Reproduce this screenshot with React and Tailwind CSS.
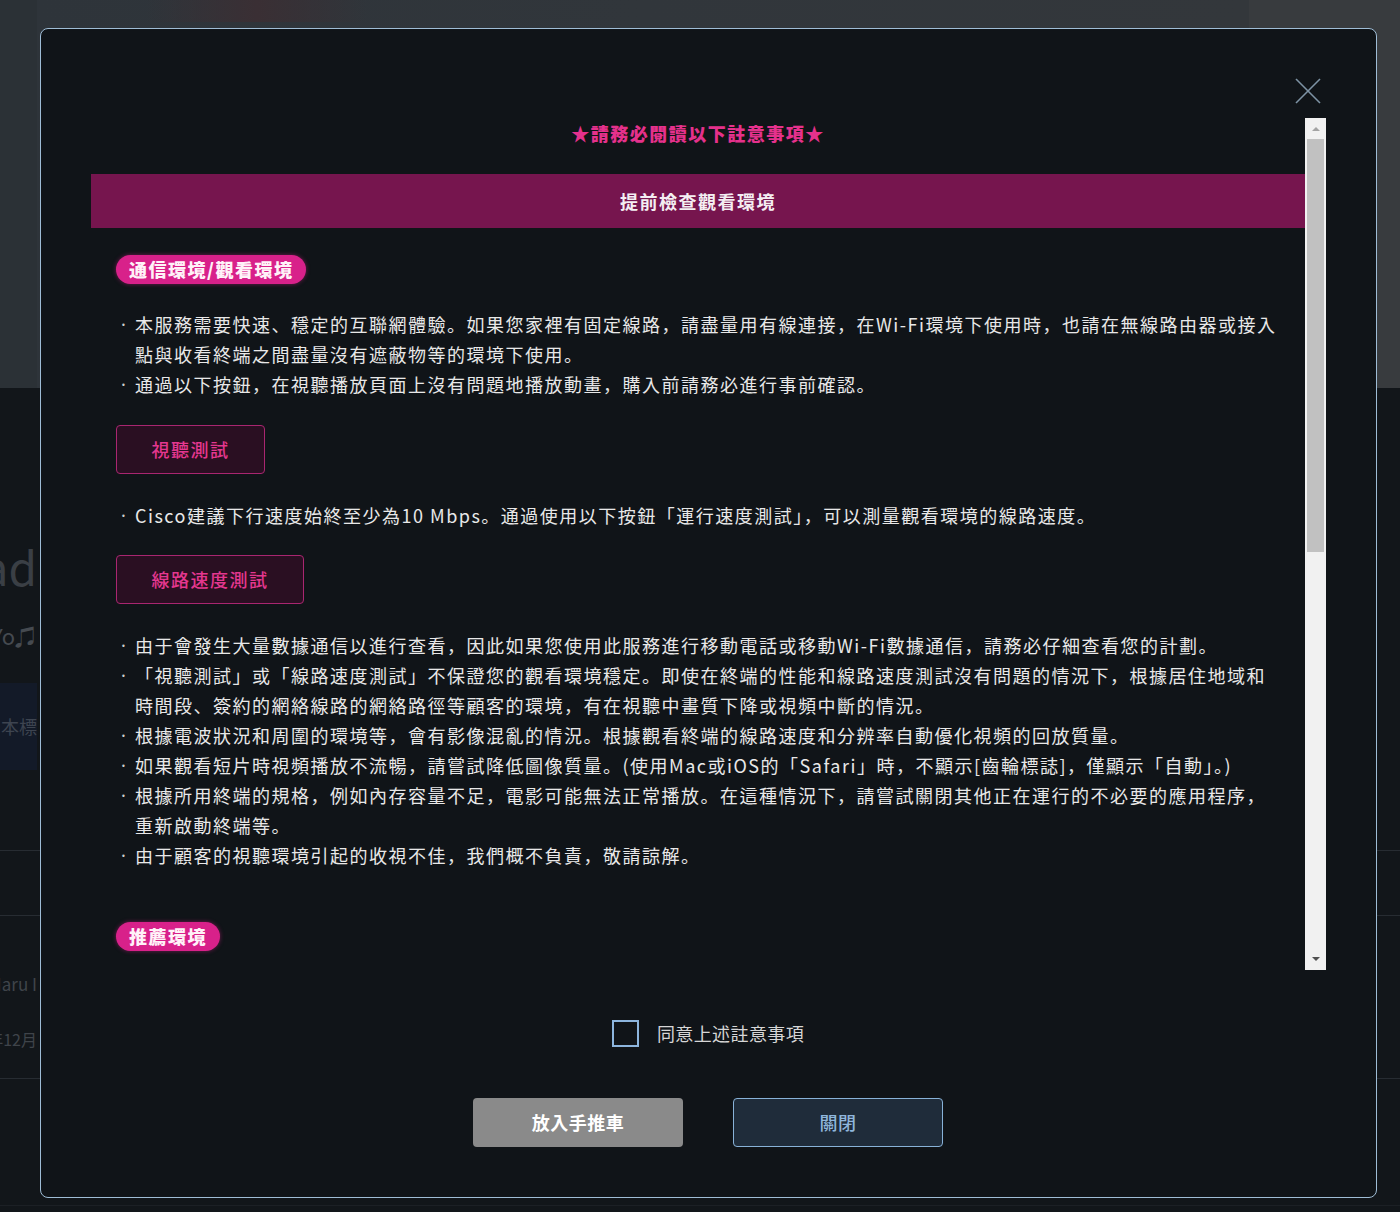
import React from "react";

function Item({ lines }) {
  return (
    <div className="flex">
      <span className="w-[19px] shrink-0 pl-[5px] font-['Noto_Sans',sans-serif] tracking-normal text-[#cfcfcf]">·</span>
      <div className="flex flex-col">
        {lines.map((l, i) => (
          <span key={i} className="whitespace-nowrap">
            {l}
          </span>
        ))}
      </div>
    </div>
  );
}

function Badge({ children }) {
  return (
    <div className="flex">
      <span className="h-[29px] rounded-full bg-[#d8218a] px-[13px] text-[18px] font-black leading-[29px] tracking-[1.5px] text-[#fff2f8] shadow-[0_0_4px_rgba(216,33,138,0.5)]">
        {children}
      </span>
    </div>
  );
}

function PinkButton({ children, w }) {
  return (
    <div className="flex">
      <button
        className={`h-[49px] ${w} rounded-[4px] border border-[#a92670] bg-[#2a0f22] text-[18px] font-medium tracking-[1.5px] text-[#e4378f]`}
      >
        {children}
      </button>
    </div>
  );
}

function BgLeft({ children, className = "" }) {
  return (
    <div className={`flex w-[37px] justify-end overflow-hidden whitespace-nowrap ${className}`}>
      {children}
    </div>
  );
}

export default function App() {
  return (
    <div className="relative h-[1212px] w-[1400px] overflow-hidden bg-[#12161a] font-['Noto_Sans_CJK_JP','Noto_Sans_CJK_TC',sans-serif]">
      {/* background page */}
      <div className="flex h-[388px]">
        <div className="w-[37px] bg-[#2b3136]" />
        <div className="flex flex-1 flex-col bg-gradient-to-r from-[#2e343a] via-[#31363b] to-[#33373b]">
          <div className="ml-[110px] h-[22px] w-[220px] bg-gradient-to-r from-transparent via-[#3a2f34] to-transparent" />
        </div>
        <div className="w-[151px] bg-[#383b3e]" />
      </div>
      <div className="flex h-[824px] flex-col">
        <div className="flex h-[295px] flex-col">
          <div className="h-[150px]" />
          <BgLeft className="h-[56px] items-center text-[46px] leading-[56px] text-[#3a3f45]">
            <span>Road</span>
          </BgLeft>
          <div className="h-[26px]" />
          <BgLeft className="h-[30px] items-center text-[22px] leading-[30px] text-[#454a50]">
            <span>Yo♫</span>
          </BgLeft>
        </div>
        <BgLeft className="h-[87px] items-center bg-[#131a28] text-[18px] text-[#3d4450]">
          <span>日本標</span>
        </BgLeft>
        <div className="h-[80px]" />
        <div className="h-[65px] border-t border-[#272c32]" />
        <div className="flex h-[163px] flex-col border-t border-[#272c32]">
          <div className="h-[53px]" />
          <BgLeft className="h-[30px] items-center text-[17px] text-[#3f444a]">
            <span>Haru I</span>
          </BgLeft>
          <div className="h-[25px]" />
          <BgLeft className="h-[30px] items-center text-[16px] text-[#3f444a]">
            <span>2022年12月</span>
          </BgLeft>
        </div>
        <div className="h-[127px] border-t border-[#272c32]" />
        <div className="flex-1 border-t border-[#1c2025]" />
      </div>

      {/* modal */}
      <div className="absolute left-[40px] top-[28px] flex h-[1170px] w-[1337px] flex-col rounded-[8px] border border-[#9fbdd6] bg-[#101418]">
        <div className="flex h-[89px] items-end justify-end pb-[14px] pr-[55px]">
          <svg width="26" height="26" viewBox="0 0 26 26">
            <line x1="1" y1="1" x2="25" y2="25" stroke="#7d93a4" strokeWidth="1.6" />
            <line x1="25" y1="1" x2="1" y2="25" stroke="#7d93a4" strokeWidth="1.6" />
          </svg>
        </div>

        <div className="ml-[50px] flex h-[852px] w-[1235px]">
          <div className="w-[1214px] overflow-hidden">
            <div className="h-[30px] text-center text-[18px] font-black leading-[30px] tracking-[1.5px] text-[#e5318c]">
              ★請務必閱讀以下註意事項★
            </div>
            <div className="mt-[26px] flex h-[54px] items-center justify-center bg-[#76154e] text-[18px] font-bold tracking-[1.5px] text-[#f4eef2]">
              提前檢查觀看環境
            </div>
            <div className="px-[25px]">
              <div className="mt-[27px]">
                <Badge>通信環境/觀看環境</Badge>
              </div>
              <div className="mt-[25px] text-[18px] leading-[30px] tracking-[1.5px] text-[#e8e8e8]">
                <Item
                  lines={[
                    "本服務需要快速、穩定的互聯網體驗。如果您家裡有固定線路，請盡量用有線連接，在Wi-Fi環境下使用時，也請在無線路由器或接入",
                    "點與收看終端之間盡量沒有遮蔽物等的環境下使用。",
                  ]}
                />
                <Item lines={["通過以下按鈕，在視聽播放頁面上沒有問題地播放動畫，購入前請務必進行事前確認。"]} />
              </div>
              <div className="mt-[26px]">
                <PinkButton w="w-[149px]">視聽測試</PinkButton>
              </div>
              <div className="mt-[26px] text-[18px] leading-[30px] tracking-[1.5px] text-[#e8e8e8]">
                <Item lines={["Cisco建議下行速度始終至少為10 Mbps。通過使用以下按鈕「運行速度測試」，可以測量觀看環境的線路速度。"]} />
              </div>
              <div className="mt-[25px]">
                <PinkButton w="w-[188px]">線路速度測試</PinkButton>
              </div>
              <div className="mt-[26px] text-[18px] leading-[30px] tracking-[1.5px] text-[#e8e8e8]">
                <Item lines={["由于會發生大量數據通信以進行查看，因此如果您使用此服務進行移動電話或移動Wi-Fi數據通信，請務必仔細查看您的計劃。"]} />
                <Item
                  lines={[
                    "「視聽測試」或「線路速度測試」不保證您的觀看環境穩定。即使在終端的性能和線路速度測試沒有問題的情況下，根據居住地域和",
                    "時間段、簽約的網絡線路的網絡路徑等顧客的環境，有在視聽中畫質下降或視頻中斷的情況。",
                  ]}
                />
                <Item lines={["根據電波狀況和周圍的環境等，會有影像混亂的情況。根據觀看終端的線路速度和分辨率自動優化視頻的回放質量。"]} />
                <Item lines={["如果觀看短片時視頻播放不流暢，請嘗試降低圖像質量。(使用Mac或iOS的「Safari」時，不顯示[齒輪標誌]，僅顯示「自動」。)"]} />
                <Item
                  lines={[
                    "根據所用終端的規格，例如內存容量不足，電影可能無法正常播放。在這種情況下，請嘗試關閉其他正在運行的不必要的應用程序，",
                    "重新啟動終端等。",
                  ]}
                />
                <Item lines={["由于顧客的視聽環境引起的收視不佳，我們概不負責，敬請諒解。"]} />
              </div>
              <div className="mt-[52px]">
                <Badge>推薦環境</Badge>
              </div>
            </div>
          </div>

          {/* scrollbar */}
          <div className="flex h-full w-[21px] flex-col bg-[#f1f1f1]">
            <div className="flex h-[21px] items-center justify-center">
              <div className="h-0 w-0 border-x-[4px] border-b-[4px] border-x-transparent border-b-[#a3a3a3]" />
            </div>
            <div className="mx-[2px] h-[413px] bg-[#c1c1c1]" />
            <div className="flex-1" />
            <div className="flex h-[22px] items-center justify-center">
              <div className="h-0 w-0 border-x-[4px] border-t-[4px] border-x-transparent border-t-[#505050]" />
            </div>
          </div>
        </div>

        <div className="mt-[50px] flex h-[27px] items-center justify-center gap-[18px] pr-[1px]">
          <div className="h-[27px] w-[27px] border-2 border-[#8db5dd]" />
          <span className="text-[18px] leading-[27px] tracking-[0.4px] text-[#d6d6d6]">同意上述註意事項</span>
        </div>

        <div className="mt-[51px] flex justify-center gap-[50px] pr-[1px]">
          <button className="h-[49px] w-[210px] rounded-[4px] bg-[#8a8a8a] text-[18px] font-bold tracking-[0.5px] text-white">
            放入手推車
          </button>
          <button className="h-[49px] w-[210px] rounded-[4px] border border-[#88b2d8] bg-[#1f2c3a] text-[18px] font-medium tracking-[0.5px] text-[#8fb6dc]">
            關閉
          </button>
        </div>
      </div>
    </div>
  );
}
